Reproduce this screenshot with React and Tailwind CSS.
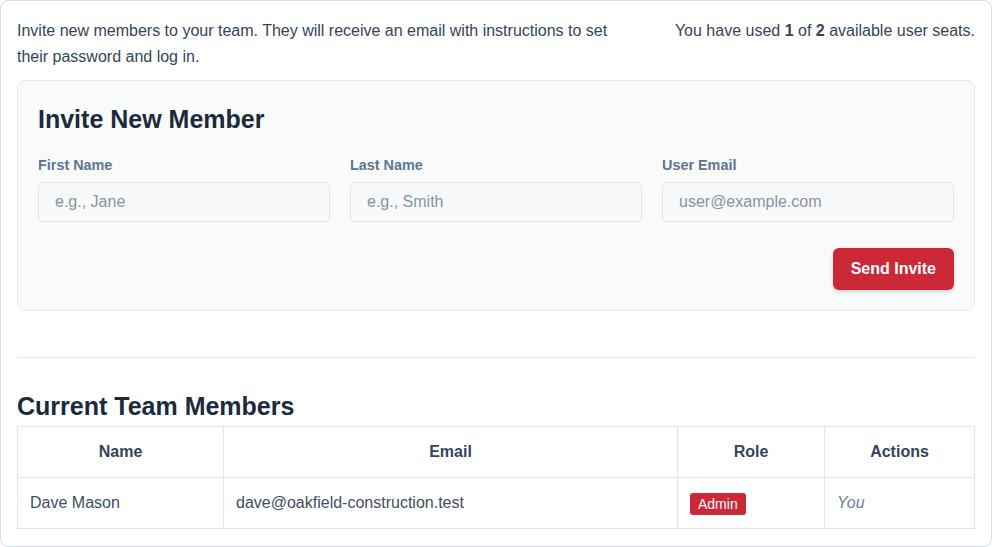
export default function App() {
  const font = { fontFamily: '"Liberation Sans", Arial, sans-serif' };
  return (
    <div style={font} className="w-[992px] h-[547px] bg-white">
      <div className="h-[547px] border border-[#d5dde6] rounded-lg p-4 flex flex-col">
        <div className="mt-[1px] flex justify-between items-start text-[16px] leading-[26px] text-[#34455a]">
          <p className="max-w-[610px]">
            Invite new members to your team. They will receive an email with instructions to set their password and log in.
          </p>
          <p>
            You have used <b className="font-bold">1</b> of <b className="font-bold">2</b> available user seats.
          </p>
        </div>

        <div className="mt-[10px] bg-[#f9fafa] border border-[#e6e9ec] rounded-lg p-5">
          <h2 className="text-[25px] leading-[36px] font-bold text-[#1b2a3d]">Invite New Member</h2>
          <div className="mt-[18px] grid grid-cols-3 gap-5">
            {[
              ["First Name", "e.g., Jane"],
              ["Last Name", "e.g., Smith"],
              ["User Email", "user@example.com"],
            ].map(([label, ph]) => (
              <div key={label} className="flex flex-col">
                <label className="text-[14.4px] leading-[20px] font-bold text-[#5c7691]">{label}</label>
                <input
                  placeholder={ph}
                  style={font}
                  className="mt-[7px] h-[40px] px-4 text-[16px] bg-[#f8f9fa] border border-[#dfe5ec] rounded-[4px] placeholder:text-[#8793a4] outline-none"
                />
              </div>
            ))}
          </div>
          <div className="mt-[26px] flex justify-end">
            <button className="h-[42px] px-[18px] bg-[#cb2937] text-white text-[16px] font-bold rounded-md shadow-[0_2px_4px_rgba(0,0,0,0.15)]">
              Send Invite
            </button>
          </div>
        </div>

        <div className="mt-[46px] border-t border-[#e6e9ec]"></div>

        <h2 className="mt-[33px] text-[25px] leading-[31px] font-bold text-[#1b2a3d]">Current Team Members</h2>
        <table className="mt-[4px] w-full border-collapse text-[16px] leading-[24px]">
          <thead>
            <tr className="text-[#34455a] font-bold">
              <th className="w-[206px] border border-[#dfe5ec] py-[13px] px-3 text-center font-bold">Name</th>
              <th className="w-[454px] border border-[#dfe5ec] py-[13px] px-3 text-center font-bold">Email</th>
              <th className="w-[147px] border border-[#dfe5ec] py-[13px] px-3 text-center font-bold">Role</th>
              <th className="border border-[#dfe5ec] py-[13px] px-3 text-center font-bold">Actions</th>
            </tr>
          </thead>
          <tbody>
            <tr className="text-[#3f4e62]">
              <td className="border border-[#dfe5ec] py-[13px] px-3">Dave Mason</td>
              <td className="border border-[#dfe5ec] py-[13px] px-3">dave@oakfield-construction.test</td>
              <td className="border border-[#dfe5ec] py-[13px] px-3">
                <span className="inline-block bg-[#cb2937] text-white text-[14px] leading-[22px] px-2 rounded-[3px] align-middle">Admin</span>
              </td>
              <td className="border border-[#dfe5ec] py-[13px] px-3 italic text-[#6a7f96]">You</td>
            </tr>
          </tbody>
        </table>
      </div>
    </div>
  );
}
